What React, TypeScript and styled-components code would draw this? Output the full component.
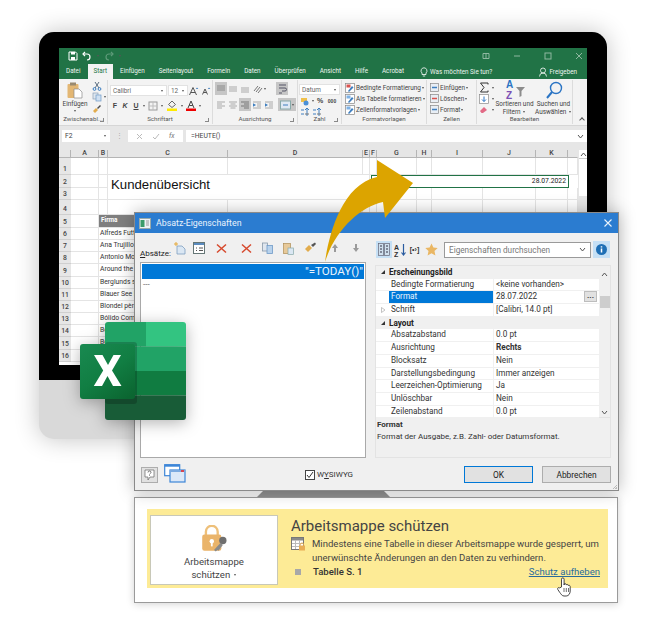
import React from 'react';
import styled, { createGlobalStyle } from 'styled-components';

const UI = `Roboto, "Open Sans", "Liberation Sans", sans-serif`;

const Global = createGlobalStyle`
  html, body { margin: 0; padding: 0; background: #fff; }
  * { box-sizing: border-box; }
`;

const Page = styled.div`
  position: relative;
  width: 650px;
  height: 633px;
  padding-top: 32px;
  overflow: hidden;
  background: #fff;
  font-family: ${UI};
`;

/* monitor */
const Monitor = styled.div`
  width: 568px;
  height: 407px;
  margin-left: 39px;
  border-radius: 15px;
  overflow: hidden;
  background: #d9d9d9;
  box-shadow: 0 0 24px rgba(0, 0, 0, 0.24);
`;
const Bezel = styled.div`
  height: 348px;
  padding: 16px 20px 0;
  background: #000;
`;
const Screen = styled.div`
  display: flex;
  flex-direction: column;
  height: 317px;
  overflow: hidden;
  background: #fff;
  color: #444;
`;

/* title + tabs */
const GreenBar = styled.div`
  height: 31px;
  background: #217346;
  color: #fff;
`;
const Quick = styled.div`
  display: flex;
  align-items: center;
  height: 15px;
  padding: 0 4px 0 9px;
  gap: 4px;
`;
const QuickSpacer = styled.div`
  flex: 1;
`;
const Tabs = styled.div`
  display: flex;
  align-items: flex-end;
  height: 16px;
  font-size: 6.3px;
`;
const Tab = styled.div<{ $on?: boolean }>`
  height: 15px;
  padding: 0 ${p => (p.$on ? 6 : 7)}px;
  line-height: 14px;
  background: ${p => (p.$on ? '#f3f3f3' : 'transparent')};
  color: ${p => (p.$on ? '#217346' : '#eef5f0')};
  white-space: nowrap;
`;
const TabRight = styled.div`
  display: flex;
  align-items: center;
  gap: 2px;
  height: 15px;
  margin-left: auto;
  padding-right: 10px;
  color: #eef5f0;
`;
const Tell = styled(TabRight)`
  margin-left: 9px;
  padding-right: 0;
`;

/* ribbon */
const Ribbon = styled.div`
  position: relative;
  display: flex;
  height: 47px;
  background: #f3f3f3;
  border-bottom: 1px solid #d6d6d6;
  font-size: 6.4px;
  color: #444;
`;
const Group = styled.div<{ $w: number }>`
  position: relative;
  display: flex;
  flex-direction: column;
  width: ${p => p.$w}px;
  border-right: 1px solid #dcdcdc;
  margin: 1px 0;
`;
const GroupBody = styled.div`
  display: flex;
  flex: 1;
  min-height: 0;
`;
const GroupLabel = styled.div`
  height: 9px;
  line-height: 8px;
  text-align: center;
  font-size: 6.2px;
  white-space: nowrap;
  color: #555;
`;
const Launcher = styled.span`
  position: absolute;
  right: 3px;
  bottom: 2px;
  width: 4px;
  height: 4px;
  border-right: 1px solid #888;
  border-bottom: 1px solid #888;
`;
const Stack = styled.div<{ $w?: number; $pad?: number }>`
  display: flex;
  flex-direction: column;
  ${p => (p.$w ? `width: ${p.$w}px;` : '')}
  padding-left: ${p => p.$pad ?? 0}px;
`;
const Line = styled.div<{ $h?: number; $mt?: number }>`
  display: flex;
  align-items: center;
  height: ${p => p.$h ?? 11.5}px;
  margin-top: ${p => p.$mt ?? 0}px;
  white-space: nowrap;
`;
const Tool = styled.span<{ $w?: number; $on?: boolean; $h?: number }>`
  display: inline-flex;
  flex: none;
  align-items: center;
  justify-content: center;
  width: ${p => p.$w ?? 12}px;
  height: ${p => p.$h ?? 11}px;
  background: ${p => (p.$on ? '#c6c6c6' : 'transparent')};
`;
const Big = styled.div`
  display: flex;
  flex-direction: column;
  align-items: center;
  text-align: center;
  line-height: 8px;
  white-space: nowrap;
`;
const Combo = styled.div<{ $w: number; $ml?: number }>`
  display: flex;
  align-items: center;
  justify-content: space-between;
  width: ${p => p.$w}px;
  height: 11px;
  margin-left: ${p => p.$ml ?? 0}px;
  padding: 0 2px;
  background: #fff;
  border: 1px solid #e2e2e2;
  font-size: 6.4px;
  color: #666;
`;
const Caret = styled.span`
  display: inline-block;
  flex: none;
  width: 0;
  height: 0;
  margin: 0 1px;
  vertical-align: middle;
  border-left: 1.5px solid transparent;
  border-right: 1.5px solid transparent;
  border-top: 2px solid #555;
`;
const BoldMark = styled.span<{ $u?: boolean; $i?: boolean; $s?: number }>`
  font-size: ${p => p.$s ?? 7}px;
  font-weight: 700;
  font-style: ${p => (p.$i ? 'italic' : 'normal')};
  text-decoration: ${p => (p.$u ? 'underline' : 'none')};
  font-family: "Liberation Sans", sans-serif;
`;
const Collapse = styled.span`
  position: absolute;
  right: 3px;
  bottom: 3px;
  width: 4px;
  height: 4px;
  border-left: 1px solid #555;
  border-top: 1px solid #555;
  transform: rotate(45deg);
`;

/* formula bar */
const FormulaBar = styled.div`
  display: flex;
  align-items: center;
  height: 24px;
  padding: 0 0 4px 3px;
  background: #e6e6e6;
  font-size: 6.8px;
`;
const NameBox = styled.div`
  display: flex;
  align-items: center;
  justify-content: space-between;
  width: 48px;
  height: 12px;
  padding: 0 3px;
  background: #fff;
  color: #444;
`;
const Dots = styled.div`
  width: 18px;
  text-align: center;
  color: #aaa;
  font-size: 7px;
`;
const FxBox = styled.div`
  display: flex;
  align-items: center;
  justify-content: space-around;
  width: 55px;
  height: 12px;
  padding: 0 4px;
  background: #fff;
  color: #777;
`;
const Formula = styled.div`
  display: flex;
  align-items: center;
  justify-content: space-between;
  flex: 1;
  height: 12px;
  margin-left: 3px;
  padding: 0 3px 0 5px;
  background: #fff;
  color: #444;
`;

/* sheet */
const SheetWrap = styled.div`
  display: flex;
  flex: 1;
  min-height: 0;
  background: #e6e6e6;
`;
const Sheet = styled.div`
  display: grid;
  grid-template-columns: 12px 28px 9px 120px 135px 7px 7px 40px 15px 51px 53px 32px 10px;
  grid-template-rows: 8px 17px 13px 12px 15px 13px repeat(11, 12.17px);
  flex: none;
  width: 519px;
  background: #fff;
  font-size: 6.8px;
`;
const Head = styled.div<{ $line?: boolean }>`
  background: #e6e6e6;
  border-right: 1px solid ${p => (p.$line ? '#b5b5b5' : '#e6e6e6')};
  border-bottom: 1px solid #b5b5b5;
  text-align: center;
  line-height: 7px;
  font-size: 7px;
  font-weight: 500;
  color: #444;
`;
const RowHead = styled.div`
  display: flex;
  align-items: flex-end;
  justify-content: center;
  padding-bottom: 1px;
  background: #e6e6e6;
  border-bottom: 1px solid #cfcfcf;
  font-size: 6.8px;
  font-weight: 500;
  color: #444;
`;
const Cell = styled.div`
  border-right: 1px solid #e4e4e4;
  border-bottom: 1px solid #e4e4e4;
  overflow: hidden;
  white-space: nowrap;
`;
const NameCell = styled(Cell)`
  grid-column: span 2;
  padding-left: 1px;
  line-height: 11px;
  color: #333;
`;
const FirmaCell = styled(Cell)`
  grid-column: span 2;
  padding-left: 2px;
  line-height: 10px;
  background: #7f7f7f;
  color: #fff;
  font-weight: 700;
  font-size: 6.4px;
`;
const TitleCell = styled.div`
  grid-column: 4 / span 2;
  grid-row: 3 / span 2;
  padding: 0 0 0 3px;
  border-bottom: 1px solid #e4e4e4;
  font-size: 13.2px;
  line-height: 20px;
  color: #111;
  font-family: "Liberation Sans", sans-serif;
`;
const DateCell = styled.div`
  grid-column: 7 / span 7;
  grid-row: 3;
  margin-right: 9px;
  margin-left: 1px;
  padding-right: 2px;
  border: 1px solid #217346;
  text-align: right;
  line-height: 11px;
  font-size: 6.8px;
  color: #222;
`;
const VScroll = styled.div`
  flex: 1;
`;
const ScrollUp = styled.div`
  display: flex;
  align-items: center;
  justify-content: center;
  height: 9px;
  margin-left: 1px;
  border-bottom: 1px solid #ccc;
  background: #fff;
`;
const ScrollThumb = styled.div`
  height: 37px;
  margin-left: 1px;
  background: #fff;
`;

/* dialog */
const Dialog = styled.div`
  position: absolute;
  left: 134px;
  top: 212px;
  display: flex;
  flex-direction: column;
  width: 485px;
  height: 279px;
  background: #f0f0f0;
  border: 1px solid #8a8a8a;
  box-shadow: 0 0 16px rgba(0, 0, 0, 0.28);
  font-size: 8.2px;
  color: #333;
`;
const DialogTitle = styled.div`
  display: flex;
  align-items: center;
  flex: none;
  height: 20px;
  padding: 0 4px;
  gap: 5px;
  background: #2b7cd0;
  color: #eaf3fc;
  font-size: 8.8px;
`;
const Close = styled.span`
  display: inline-flex;
  margin-left: auto;
  margin-right: 1px;
`;
const DialogBody = styled.div`
  display: flex;
  flex: 1;
  min-height: 0;
  padding: 8px 7px 0 5px;
`;
const LeftCol = styled.div`
  display: flex;
  flex-direction: column;
  width: 226px;
`;
const RightCol = styled.div`
  display: flex;
  flex-direction: column;
  width: 236px;
  margin-left: 9px;
`;
const Bar = styled.div`
  display: flex;
  align-items: center;
  flex: none;
  height: 21px;
  padding-bottom: 7px;
`;
const BarLabel = styled.span`
  align-self: flex-end;
  width: 32px;
  margin-bottom: -3px;
  font-size: 8px;
  color: #222;
  white-space: nowrap;
  & u { text-decoration: underline; }
`;
const BarTool = styled.span<{ $gap: number }>`
  display: inline-flex;
  justify-content: center;
  width: 16px;
  margin-right: ${p => p.$gap}px;
`;
const List = styled.div`
  flex: 1;
  padding: 1px;
  background: #fff;
  border: 1px solid #a9a9a9;
`;
const ListSel = styled.div`
  height: 15px;
  padding-right: 1px;
  background: #0078d7;
  color: #eaf4fd;
  text-align: right;
  font-size: 11.6px;
  line-height: 15px;
`;
const ListRest = styled.div`
  height: 11px;
  padding-left: 1px;
  line-height: 11px;
  font-size: 8px;
  color: #555;
`;
const PropBar = styled(Bar)`
  height: 17px;
  margin: 0 0 7px 1px;
  padding-bottom: 0;
`;
const Toggle = styled.span<{ $on?: boolean; $w: number }>`
  display: inline-flex;
  align-items: center;
  justify-content: center;
  flex: none;
  width: ${p => p.$w}px;
  height: 17px;
  background: ${p => (p.$on ? '#c6e0f5' : 'transparent')};
`;
const SearchBox = styled.div`
  display: flex;
  align-items: center;
  justify-content: space-between;
  width: 147px;
  height: 16px;
  margin: 0 2px 0 3px;
  padding: 0 4px;
  background: #fff;
  border: 1px solid #9a9a9a;
  font-size: 8.2px;
  color: #777;
`;
const PropPanel = styled.div`
  display: flex;
  flex: none;
  height: 153px;
  background: #fff;
  border: 1px solid #e3e3e3;
`;
const PropRows = styled.div`
  display: flex;
  flex-direction: column;
  flex: 1;
`;
const PropRow = styled.div`
  display: flex;
  flex: none;
  align-items: center;
  height: 12.7px;
  border-bottom: 1px solid #f0f0f0;
  color: #333;
`;
const GroupRow = styled(PropRow)`
  background: #f0f0f0;
  font-weight: 700;
  color: #222;
  border-bottom: 0;
`;
const Gutter = styled.span`
  display: inline-flex;
  align-items: center;
  justify-content: center;
  flex: none;
  width: 13px;
`;
const PropName = styled.span<{ $sel?: boolean }>`
  flex: none;
  width: 105px;
  height: 100%;
  padding-left: 2px;
  line-height: 11px;
  white-space: nowrap;
  background: ${p => (p.$sel ? '#0078d7' : 'transparent')};
  color: ${p => (p.$sel ? '#eaf4fd' : 'inherit')};
  border-right: 1px solid #f0f0f0;
`;
const PropValue = styled.span<{ $b?: boolean }>`
  display: flex;
  justify-content: space-between;
  flex: 1;
  height: 100%;
  padding-left: 2px;
  white-space: nowrap;
  line-height: 11px;
  font-weight: ${p => (p.$b ? 700 : 400)};
`;
const Ellipsis = styled.span`
  width: 13px;
  height: 11px;
  margin: 0 2px 0 0;
  background: #e1e1e1;
  border: 1px solid #bdbdbd;
  text-align: center;
  line-height: 7px;
  font-size: 8px;
  font-weight: 700;
`;
const PropScroll = styled.div`
  display: flex;
  flex-direction: column;
  align-items: center;
  justify-content: space-between;
  flex: none;
  width: 11px;
  padding: 6px 0 2px;
  background: #f0f0f0;
`;
const PropThumb = styled.div`
  width: 10px;
  height: 12px;
  margin-top: -84px;
  background: #cdcdcd;
`;
const Describe = styled.div`
  flex: 1;
  padding: 1px 1px;
  background: #f0f0f0;
  border: 1px solid #e3e3e3;
  border-top: 0;
  font-size: 8px;
  line-height: 11.5px;
`;
const DescribeHead = styled.div`
  font-weight: 700;
`;
const Footer = styled.div`
  position: relative;
  display: flex;
  align-items: center;
  flex: none;
  height: 32px;
  padding: 1px 7px 0 6px;
`;
const HelpBtn = styled.span`
  display: inline-flex;
  align-items: center;
  justify-content: center;
  width: 17px;
  height: 16px;
  background: #e1e1e1;
  border: 1px solid #adadad;
`;
const Windows = styled.span`
  display: inline-flex;
  margin-left: 6px;
  margin-top: -3px;
`;
const Wysiwyg = styled.label`
  display: flex;
  align-items: center;
  gap: 2px;
  margin-left: 119px;
  font-size: 8px;
`;
const CheckBox = styled.span`
  display: inline-flex;
  align-items: center;
  justify-content: center;
  width: 10px;
  height: 10px;
  background: #fff;
  border: 1px solid #444;
`;
const Btn = styled.button<{ $primary?: boolean }>`
  width: 69px;
  height: 17px;
  margin-left: ${p => (p.$primary ? 'auto' : '9px')};
  padding: 0;
  background: #e1e1e1;
  border: ${p => (p.$primary ? '1px solid #0078d7' : '1px solid #adadad')};
  font-family: inherit;
  font-size: 8.4px;
  color: #222;
`;
const Grip = styled.span`
  position: absolute;
  right: 1px;
  bottom: 1px;
  width: 6px;
  height: 6px;
  background: repeating-linear-gradient(135deg, transparent 0 1px, #bbb 1px 2px);
  clip-path: polygon(100% 0, 100% 100%, 0 100%);
`;

/* stand + lower panel */
const Stand = styled.div`
  position: absolute;
  left: 257px;
  top: 491px;
  width: 133px;
  height: 6px;
  background: #8f8f8f;
  clip-path: polygon(6px 0, 127px 0, 100% 100%, 0 100%);
`;
const Panel = styled.div`
  width: 484px;
  height: 106px;
  margin: 58px 0 0 134px;
  padding: 11px 9px 0 12px;
  background: #fff;
  border: 1px solid #9a9a9a;
  box-shadow: 0 1px 8px rgba(0, 0, 0, 0.18);
`;
const Band = styled.div`
  display: flex;
  height: 79px;
  padding: 6px 0 3px 3px;
  background: #fdeb96;
`;
const ProtectBtn = styled.div`
  display: flex;
  flex-direction: column;
  align-items: center;
  flex: none;
  width: 128px;
  height: 70px;
  padding-top: 9px;
  background: #fff;
  border: 1px solid #c8c8b8;
  font-size: 9.6px;
  line-height: 13px;
  color: #444;
`;
const ProtectText = styled.div`
  margin-top: 2px;
  text-align: center;
`;
const Info = styled.div`
  display: flex;
  flex-direction: column;
  flex: 1;
  padding: 1px 8px 0 13px;
  color: #444;
`;
const InfoTitle = styled.div`
  font-size: 15px;
  line-height: 20px;
  color: #444;
`;
const InfoBody = styled.div`
  display: flex;
  gap: 7px;
  margin-top: 1px;
  font-size: 9.55px;
  line-height: 13.5px;
  white-space: nowrap;
`;
const InfoFoot = styled.div`
  display: flex;
  align-items: center;
  margin-top: 2px;
  font-size: 9.55px;
`;
const Bullet = styled.span`
  width: 6px;
  height: 6px;
  margin: 0 12px 0 4px;
  background: #a8a8a8;
`;
const SheetName = styled.span`
  font-weight: 500;
  color: #333;
`;
const Unlock = styled.a`
  margin-left: auto;
  color: #2a6b9c;
  text-decoration: underline;
`;

/* overlays */
const Overlay = styled.div<{ $x: number; $y: number }>`
  position: absolute;
  left: ${p => p.$x}px;
  top: ${p => p.$y}px;
  display: flex;
`;
const LogoWrap = styled(Overlay)`
  filter: drop-shadow(0 3px 8px rgba(0, 0, 0, 0.3));
`;

/* drawings */
const Svg = ({ w = 10, h = 10, children }: { w?: number; h?: number; children: React.ReactNode }) => (
  <svg width={w} height={h} viewBox={`0 0 ${w} ${h}`} fill="none">{children}</svg>
);

const Paste = () => (
  <Svg w={16} h={17}>
    <rect x="0.5" y="2" width="11" height="14" fill="#e3b774" rx="1" />
    <rect x="3" y="0.5" width="6" height="3" fill="#9a8a70" />
    <path d="M7 7h5l3 3v6H7z" fill="#fff" stroke="#8a8a8a" strokeWidth=".7" />
  </Svg>
);
const Cut = () => (
  <Svg><path d="M3 1l4 6M7 1L3 7" stroke="#5a6d80" /><circle cx="2.5" cy="8" r="1.4" stroke="#3f7fc0" /><circle cx="7.5" cy="8" r="1.4" stroke="#3f7fc0" /></Svg>
);
const CopyIco = () => (
  <Svg><rect x="1" y="1" width="5" height="6" fill="#dfe6ee" stroke="#8aa0b8" strokeWidth=".7" /><rect x="4" y="3" width="5" height="6" fill="#cfe0f2" stroke="#6f9bc8" strokeWidth=".7" /></Svg>
);
const Painter = () => (
  <Svg><path d="M1 7l3-3 2 2-3 3z" fill="#e2ac4d" /><path d="M5 4l3-3 1 1-3 3z" fill="#4c4c4c" /></Svg>
);
const GrowA = ({ small }: { small?: boolean }) => (
  <Svg w={11} h={10}><path d={small ? 'M1.5 8.5L4 3l2.5 5.5M2.5 6.5h3' : 'M.5 9L4 1.5 7.5 9M2 6.5h4'} stroke="#555" /><path d="M8 1.5l1.3 1.6H6.800z" fill="#3f7fc0" /></Svg>
);
const BorderIco = () => (
  <Svg><rect x="1" y="1" width="8" height="8" stroke="#9a9a9a" /><path d="M5 1v8M1 5h8" stroke="#bdbdbd" /></Svg>
);
const Fill = () => (
  <Svg w={10} h={11}><path d="M5 1l3.500 3.500L5 7.500 1.500 4.500z" stroke="#666" /><rect y="8.500" width="10" height="2.500" fill="#ffeb00" /></Svg>
);
const FontColor = () => (
  <Svg w={10} h={11}><path d="M2 8l3-7 3 7M3.200 5.500h3.600" stroke="#444" /><rect y="8.500" width="10" height="2.500" fill="#e00" /></Svg>
);
const AlignV = ({ at }: { at: 'top' | 'mid' | 'bot' }) => {
  const d = at === 'top' ? 'M1 2h8M1 4h8M1 6h8' : at === 'mid' ? 'M1 3h8M1 5h8M1 7h8' : 'M1 4h8M1 6h8M1 8h8';
  return <Svg><path d={d} stroke={at === 'top' ? '#8a8a8a' : '#a9a9a9'} /></Svg>;
};
const AlignH = ({ at }: { at: 'l' | 'c' | 'r' }) => {
  const d = at === 'l' ? 'M1 2h8M1 4h5M1 6h8M1 8h5' : at === 'c' ? 'M1 2h8M2.500 4h5M1 6h8M2.500 8h5' : 'M1 2h8M4 4h5M1 6h8M4 8h5';
  return <Svg><path d={d} stroke={at === 'r' ? '#777' : '#a9a9a9'} /></Svg>;
};
const Indent = () => (
  <Svg><path d="M1 2h8M5 4h4M5 6h4M1 8h8" stroke="#a9a9a9" /><path d="M4 5L1 3.200v3.600z" fill="#3f7fc0" /></Svg>
);
const Orient = () => (
  <Svg w={11}><path d="M2 7l4-5M4 8l4-5M6 9l4-5" stroke="#777" /></Svg>
);
const WrapIco = () => (
  <Svg w={11} h={12}><path d="M2 2h7M2 5h6a1.500 1.500 0 010 3H5M2 10h3" stroke="#556" /></Svg>
);
const Merge = () => (
  <Svg w={11}><rect x=".5" y="1" width="10" height="8" fill="#dfe9f3" stroke="#8aa" /><path d="M3 5h5" stroke="#3f7fc0" /></Svg>
);
const Money = () => (
  <Svg w={11}><rect x="1" y="2" width="6" height="4" fill="#f0c04a" /><circle cx="6" cy="7" r="2.500" fill="#4a90d9" /></Svg>
);
const Decimal = () => (
  <Svg w={11}><path d="M1 3h3M1 7h3M7 1v8M5 3l2-2 2 2" stroke="#3f7fc0" /><path d="M5 7h4" stroke="#777" /></Svg>
);
const StyleIco = ({ c }: { c: string }) => (
  <Svg w={10} h={10}><rect x=".5" y=".5" width="9" height="9" fill="#fff" stroke="#888" strokeWidth=".7" /><rect x="1.500" y="1.500" width="4" height="3" fill={c} /><path d="M3 8l4-5 1.500 1.500L4 9z" fill="#3f7fc0" /></Svg>
);
const CellIco = ({ c }: { c: string }) => (
  <Svg w={9} h={9}><rect x=".5" y=".5" width="8" height="8" fill="#e8eef5" stroke="#888" strokeWidth=".7" /><path d="M2 4.500h5" stroke={c} strokeWidth="1.500" /></Svg>
);
const Sigma = () => (
  <Svg w={10} h={11}><path d="M9 2.500V1H1.500l3.500 4.500L1.500 10H9V8.500" stroke="#333" /></Svg>
);
const Down = () => (
  <Svg w={10} h={10}><rect x=".5" y=".5" width="9" height="9" fill="#fff" stroke="#8a8a8a" strokeWidth=".7" /><path d="M5 2.500v5M3 5.500l2 2 2-2" stroke="#2a74c4" /></Svg>
);
const Eraser = () => (
  <Svg><path d="M1 6l4-4 3 3-4 3H2.500z" fill="#e26a86" /></Svg>
);
const SortIco = () => (
  <Svg w={22} h={22}>
    <text x="2" y="9" fontSize="10" fontWeight="700" fill="#2a74c4" fontFamily="Liberation Sans">A</text>
    <text x="2" y="20" fontSize="10" fontWeight="700" fill="#7b4fb5" fontFamily="Liberation Sans">Z</text>
    <path d="M12 8h9l-3.500 4v5l-2 1v-6z" fill="#8c8c8c" />
  </Svg>
);
const SearchIco = () => (
  <Svg w={18} h={19}><circle cx="11" cy="7" r="5.500" stroke="#2a74c4" strokeWidth="1.400" /><path d="M7 11l-5 6" stroke="#2a74c4" strokeWidth="2" /></Svg>
);
const SaveIco = () => (
  <Svg><path d="M1 1h6.500L9 2.500V9H1z" stroke="#fff" /><rect x="3" y="1" width="4" height="2.500" fill="#fff" /><rect x="3" y="6" width="4" height="3" fill="#fff" /></Svg>
);
const Undo = ({ dim }: { dim?: boolean }) => (
  <Svg>
    <path d={dim ? 'M9 3H5a3 3 0 000 6' : 'M1 3h4a3 3 0 010 6'} stroke={dim ? '#5d9a78' : '#fff'} strokeWidth="1.200" />
    <path d={dim ? 'M7 1l2 2-2 2' : 'M3 1L1 3l2 2'} stroke={dim ? '#5d9a78' : '#fff'} strokeWidth="1.200" />
  </Svg>
);
const Win = ({ kind }: { kind: string }) => (
  <Svg w={8} h={8}>
    {kind === 'box' && <path d="M1 1.500h6v5H1zM4 1.500v5" stroke="#8fb8a0" />}
    {kind === 'min' && <path d="M1 4h6" stroke="#8fb8a0" />}
    {kind === 'max' && <rect x="1" y="1" width="6" height="6" stroke="#8fb8a0" />}
    {kind === 'x' && <path d="M1 1l6 6M7 1L1 7" stroke="#8fb8a0" />}
  </Svg>
);
const Bulb = () => (
  <Svg w={8} h={10}><path d="M4 .800a3 3 0 012 5.200V7.500H2V6A3 3 0 014 .800zM2.800 9h2.400" stroke="#fff" strokeWidth=".8" /></Svg>
);
const UserIco = () => (
  <Svg w={8} h={10}><circle cx="4" cy="3.500" r="2.500" stroke="#fff" strokeWidth=".8" /><path d="M.500 9.500a3.500 3.500 0 017 0" stroke="#fff" strokeWidth=".8" /></Svg>
);
const DialogIcon = () => (
  <Svg w={12} h={11}><rect x=".5" y=".5" width="11" height="10" fill="#eef2f5" stroke="#9aa" /><rect x="1.500" y="2" width="4" height="7" fill="#3a9b6a" /><path d="M7 3h3M7 5h3M7 7h3" stroke="#999" /></Svg>
);
const CloseX = () => (
  <Svg><path d="M1.500 1.500l7 7M8.500 1.500l-7 7" stroke="#eaf3fc" strokeWidth="1.100" /></Svg>
);
const RedX = () => (
  <Svg w={11} h={11}><path d="M1 1.500l9 8M10 1.500l-9 8" stroke="#d6482c" strokeWidth="1.500" /></Svg>
);
const NewPar = () => (
  <Svg w={12} h={13}><path d="M3 4h5l3 3v5H3z" fill="#dbe7f3" stroke="#7f9fbf" strokeWidth=".8" /><path d="M2 0v4M0 2h4" stroke="#e5a93b" /></Svg>
);
const Form = () => (
  <Svg w={12} h={12}><rect x=".5" y=".5" width="11" height="11" fill="#fff" stroke="#677" /><rect x="1" y="1" width="10" height="2" fill="#5b8cc0" /><path d="M3 6h1M6 6h4M3 8.500h1M6 8.500h4" stroke="#555" /></Svg>
);
const Duplicate = () => (
  <Svg w={11} h={12}><rect x=".5" y="1" width="5" height="8" fill="#dfe6ee" stroke="#8899aa" strokeWidth=".8" /><rect x="5" y="3.500" width="5.500" height="8" fill="#b8d2ec" stroke="#6f9bc8" strokeWidth=".8" /></Svg>
);
const PastePar = () => (
  <Svg w={11} h={13}><rect x=".5" y="1.500" width="7" height="10" fill="#e7c999" stroke="#b08d55" strokeWidth=".7" /><rect x="5" y="6" width="5.500" height="6.500" fill="#dbe7f3" stroke="#8aa" strokeWidth=".7" /></Svg>
);
const Broom = () => (
  <Svg w={13} h={12}><path d="M1 7l4-4 3 3-4 4z" fill="#e2ac4d" /><path d="M7 3l4-2.500 1 1.500-3 3z" fill="#555" /></Svg>
);
const ArrowV = ({ up }: { up?: boolean }) => (
  <Svg w={8} h={10}><path d={up ? 'M4 1L1 5h2v4h2V5h2z' : 'M4 9L1 5h2V1h2v4h2z'} fill="#9a9a9a" /></Svg>
);
const Categories = () => (
  <Svg w={12} h={13}><rect x=".5" y=".5" width="11" height="12" fill="#cfe0ee" stroke="#667" strokeWidth=".7" /><path d="M6 1v11M2 3h2M2 6h2M2 9h2M8 3h2M8 6h2M8 9h2" stroke="#334" /></Svg>
);
const SortAz = () => (
  <Svg w={12} h={14}>
    <text x="0" y="6.500" fontSize="7" fontWeight="700" fill="#333" fontFamily="Liberation Sans">A</text>
    <text x="0" y="13.500" fontSize="7" fontWeight="700" fill="#333" fontFamily="Liberation Sans">Z</text>
    <path d="M9.500 1v11M7.500 9.500l2 2.500 2-2.500" stroke="#2a5ca0" strokeWidth="1.200" />
  </Svg>
);
const Star = () => (
  <Svg w={13} h={13}><path d="M6.500.500l1.900 4 4.300.500-3.200 3 .9 4.400L6.500 10.200 2.600 12.400l.9-4.400-3.200-3 4.300-.500z" fill="#eab764" /></Svg>
);
const InfoIco = () => (
  <Svg w={11} h={11}><circle cx="5.500" cy="5.500" r="5.500" fill="#1f6fb5" /><path d="M5.500 2.200v1.200M5.500 4.600v4" stroke="#fff" strokeWidth="1.500" /></Svg>
);
const Tri = ({ open }: { open?: boolean }) => (
  <Svg w={6} h={6}>{open ? <path d="M5 1v4H1z" fill="#333" /> : <path d="M1.500 .5L5 3 1.500 5.500z" stroke="#aaa" strokeWidth=".7" />}</Svg>
);
const Chevron = ({ up }: { up?: boolean }) => (
  <Svg w={7} h={5}><path d={up ? 'M1 4l2.500-3L6 4' : 'M1 1l2.500 3L6 1'} stroke="#555" strokeWidth="1" /></Svg>
);
const Help = () => (
  <Svg w={11} h={12}><path d="M1 1h9v7H6l-2 3V8H1z" fill="#fff" stroke="#666" strokeWidth=".7" /><path d="M4 3.500a1.500 1.500 0 113 0c0 1-1.500 1-1.500 2M5.500 6.300v.7" stroke="#444" strokeWidth=".7" /></Svg>
);
const WindowsIco = () => (
  <Svg w={22} h={19}>
    <rect x=".7" y=".7" width="15" height="11" fill="#fff" stroke="#3d86d8" strokeWidth="1.200" />
    <rect x=".7" y=".7" width="15" height="2" fill="#3d86d8" />
    <rect x="6" y="6" width="15" height="12" fill="#dbe8f8" stroke="#3d86d8" strokeWidth="1.200" />
    <rect x="6" y="6" width="15" height="2" fill="#7aa9e0" />
    <rect x="17" y="6" width="3" height="2" fill="#d64550" />
  </Svg>
);
const Check = () => (
  <Svg w={8} h={8}><path d="M1 4l2 2.500L7 1" stroke="#333" /></Svg>
);
const Lock = () => (
  <svg width="28" height="28" viewBox="0 0 38 38" fill="none">
    <path d="M8 14V9a8 8 0 0116 0v5" stroke="#eec07a" strokeWidth="3.200" />
    <rect x="3" y="13" width="26" height="22" rx="3" fill="#eab46a" />
    <circle cx="16" cy="22" r="3" fill="#fff" />
    <path d="M16 23v6" stroke="#fff" strokeWidth="2.400" />
    <circle cx="31" cy="21" r="5" fill="#6f6f6f" />
    <path d="M28 24l-9 10 2.500 2 2-2 1.500 1 6-8" fill="#8a8a8a" />
  </svg>
);
const TableLock = () => (
  <Svg w={14} h={14}>
    <rect x=".5" y=".5" width="12" height="12" fill="#fff" stroke="#777" />
    <rect x="1" y="1" width="11" height="2.500" fill="#8a8a8a" />
    <path d="M4.500 3v9M8.500 3v9M1 6.500h11M1 9.500h11" stroke="#bbb" />
    <rect x="8" y="8.500" width="6" height="5" fill="#e9ad55" />
    <path d="M9.500 8.500v-1a1.500 1.500 0 013 0v1" stroke="#e9ad55" />
  </Svg>
);
const Hand = () => (
  <Svg w={15} h={20}>
    <path d="M4.500 10V2.200a1.300 1.300 0 012.600 0V8l.3-1.300c1.500-.3 1.700.3 1.800 1.300.5-1 2-.7 2 .5.800-.5 2-.1 2 1V14c0 2.500-1.500 5-4 5H7c-2 0-3-2-4.200-3.500L.8 12.500c-.8-1.300.7-2.500 1.800-1.600z" fill="#fff" stroke="#333" strokeWidth=".9" strokeLinejoin="round" />
    <path d="M7 11v4M9.300 11v4M11.500 11v4" stroke="#333" strokeWidth=".7" />
  </Svg>
);
const ArrowGold = () => (
  <svg width="100" height="110" viewBox="0 0 100 110">
    <path d="M5 107C8 85 20 30 57 22L57 5 93 28 65 63 63 47C40 52 15 75 5 107z" fill="#dca400" />
  </svg>
);
const ExcelLogo = () => (
  <svg width="106" height="98" viewBox="0 0 106 98">
    <path d="M28 0h38v24.500H25V3a3 3 0 013-3z" fill="#21a366" />
    <path d="M66 0h37a3 3 0 013 3v21.500H66z" fill="#33c481" />
    <rect x="25" y="24.500" width="81" height="24.500" fill="#21a366" />
    <rect x="25" y="49" width="81" height="24.500" fill="#107c41" />
    <path d="M25 73.500h81V95a3 3 0 01-3 3H28a3 3 0 01-3-3z" fill="#185c37" />
    <rect x="25" y="20" width="32" height="62" rx="3" fill="#000" opacity=".2" />
    <defs>
      <linearGradient id="xl" x1=".15" y1="0" x2=".85" y2="1">
        <stop offset="0" stopColor="#18884f" />
        <stop offset=".5" stopColor="#117e43" />
        <stop offset="1" stopColor="#0b6631" />
      </linearGradient>
    </defs>
    <rect x="0" y="22" width="55" height="55" rx="3" fill="url(#xl)" />
    <path d="M14 33h8.500l5.500 10 5.500-10h7.500l-9 15.500L41.500 64H33l-5.500-10L22 64h-8.200l9.400-15.500z" fill="#fff" />
  </svg>
);

const colHeads: [string, boolean][] = [
  ['', true], ['A', true], ['B', true], ['C', true], ['D', true], ['E', true], ['F', true],
  ['G', true], ['H', true], ['I', true], ['J', true], ['K', true], ['', false],
];
const tableNames: Record<number, string> = {
  6: 'Alfreds Futterkiste',
  7: 'Ana Trujillo Emparedados',
  8: 'Antonio Moreno Taquería',
  9: 'Around the Horn',
  10: 'Berglunds snabbköp',
  11: 'Blauer See Delikatessen',
  12: 'Blondel père et fils',
  13: 'Bólido Comidas preparadas',
  14: "Bon app'",
  15: 'Bottom-Dollar Markets',
  16: "B's Beverages",
};

const SheetGrid = () => {
  const rows = Array.from({ length: 16 }, (_, i) => i + 1);
  return (
    <Sheet>
      {colHeads.map(([c, line], i) => <Head key={i} $line={line}>{c}</Head>)}
      {rows.flatMap(r => {
        const out: React.ReactNode[] = [<RowHead key={`h${r}`}>{r}</RowHead>];
        for (let c = 1; c <= 12; c++) {
          const key = `${r}-${c}`;
          if ((r === 2 || r === 3) && (c === 3 || c === 4)) continue;
          if (r === 2 && c >= 6) continue;
          // the table starts in column B and runs over C
          if (r >= 5 && c === 3) continue;
          if (c === 2 && r === 5) out.push(<FirmaCell key={key}>Firma</FirmaCell>);
          else if (c === 2 && tableNames[r]) out.push(<NameCell key={key}>{tableNames[r]}</NameCell>);
          else out.push(<Cell key={key} />);
        }
        return out;
      })}
      <TitleCell>Kundenübersicht</TitleCell>
      <DateCell>28.07.2022</DateCell>
    </Sheet>
  );
};

const Ribbons = () => (
  <Ribbon>
    <Group $w={49}>
      <GroupBody>
        <Stack $w={32}>
          <Big>
            <Tool $w={32} $h={20}><Paste /></Tool>
            <span>Einfügen</span>
            <Tool $w={32} $h={6}><Caret /></Tool>
          </Big>
        </Stack>
        <Stack>
          <Line><Tool><Cut /></Tool></Line>
          <Line><Tool><CopyIco /></Tool><Caret /></Line>
          <Line><Tool><Painter /></Tool></Line>
        </Stack>
      </GroupBody>
      <GroupLabel>Zwischenabl...</GroupLabel>
      <Launcher />
    </Group>
    <Group $w={105}>
      <GroupBody>
        <Stack $pad={2}>
          <Line $h={13} $mt={4}>
            <Combo $w={57}>Calibri<Caret /></Combo>
            <Combo $w={20} $ml={1}>12<Caret /></Combo>
            <Tool $w={12}><GrowA /></Tool>
            <Tool $w={12}><GrowA small /></Tool>
          </Line>
          <Line $h={13} $mt={2}>
            <Tool $w={10}><BoldMark>F</BoldMark></Tool>
            <Tool $w={10}><BoldMark $i>K</BoldMark></Tool>
            <Tool $w={12}><BoldMark $u>U</BoldMark></Tool>
            <Caret />
            <Tool $w={14}><BorderIco /></Tool>
            <Caret />
            <Tool $w={16}><Fill /></Tool>
            <Caret />
            <Tool $w={14}><FontColor /></Tool>
            <Caret />
          </Line>
        </Stack>
      </GroupBody>
      <GroupLabel>Schriftart</GroupLabel>
      <Launcher />
    </Group>
    <Group $w={85}>
      <GroupBody>
        <Stack $pad={2}>
          <Line $h={15} $mt={1}>
            <Tool $w={12} $h={13} $on><AlignV at="top" /></Tool>
            <Tool $w={12}><AlignV at="mid" /></Tool>
            <Tool $w={12}><AlignV at="bot" /></Tool>
            <Tool $w={12}><Orient /></Tool>
            <Caret />
            <Tool $w={9} />
            <Tool $w={12} $h={13} $on><WrapIco /></Tool>
          </Line>
          <Line $h={15} $mt={1}>
            <Tool $w={12}><AlignH at="l" /></Tool>
            <Tool $w={12}><AlignH at="c" /></Tool>
            <Tool $w={12} $h={13} $on><AlignH at="r" /></Tool>
            <Tool $w={12}><Indent /></Tool>
            <Tool $w={12}><Indent /></Tool>
            <Tool $w={3} />
            <Tool $w={18} $h={13} $on><Merge /><Caret /></Tool>
          </Line>
        </Stack>
      </GroupBody>
      <GroupLabel>Ausrichtung</GroupLabel>
      <Launcher />
    </Group>
    <Group $w={44}>
      <GroupBody>
        <Stack $pad={1}>
          <Line $h={13} $mt={4}><Combo $w={41}>Datum<Caret /></Combo></Line>
          <Line $h={12}>
            <Tool $w={12}><Money /></Tool><Caret />
            <Tool $w={10}><BoldMark>%</BoldMark></Tool>
            <Tool $w={14}><BoldMark $s={5}>000</BoldMark></Tool>
          </Line>
          <Line $h={12}>
            <Tool $w={12}><Decimal /></Tool>
            <Tool $w={12}><Decimal /></Tool>
          </Line>
        </Stack>
      </GroupBody>
      <GroupLabel>Zahl</GroupLabel>
      <Launcher />
    </Group>
    <Group $w={85}>
      <GroupBody>
        <Stack $pad={2}>
          <Line $mt={2}><Tool $w={12}><StyleIco c="#d9534f" /></Tool>Bedingte Formatierung<Caret /></Line>
          <Line><Tool $w={12}><StyleIco c="#7fb2e5" /></Tool>Als Tabelle formatieren<Caret /></Line>
          <Line><Tool $w={12}><StyleIco c="#7fb2e5" /></Tool>Zellenformatvorlagen<Caret /></Line>
        </Stack>
      </GroupBody>
      <GroupLabel>Formatvorlagen</GroupLabel>
    </Group>
    <Group $w={50}>
      <GroupBody>
        <Stack $pad={2}>
          <Line $mt={2}><Tool $w={11}><CellIco c="#3f7fc0" /></Tool>Einfügen<Caret /></Line>
          <Line><Tool $w={11}><CellIco c="#d9534f" /></Tool>Löschen<Caret /></Line>
          <Line><Tool $w={11}><CellIco c="#3f7fc0" /></Tool>Format<Caret /></Line>
        </Stack>
      </GroupBody>
      <GroupLabel>Zellen</GroupLabel>
    </Group>
    <Group $w={96}>
      <GroupBody>
        <Stack>
          <Line $mt={2}><Tool $w={14}><Sigma /></Tool><Caret /></Line>
          <Line><Tool $w={14}><Down /></Tool><Caret /></Line>
          <Line><Tool $w={14}><Eraser /></Tool><Caret /></Line>
        </Stack>
        <Big>
          <Tool $w={39} $h={20}><SortIco /></Tool>
          <span>Sortieren und</span>
          <span>Filtern <Caret /></span>
        </Big>
        <Big>
          <Tool $w={39} $h={20}><SearchIco /></Tool>
          <span>Suchen und</span>
          <span>Auswählen <Caret /></span>
        </Big>
      </GroupBody>
      <GroupLabel>Bearbeiten</GroupLabel>
    </Group>
    <Collapse />
  </Ribbon>
);

const props: [string, string, boolean?][] = [
  ['Absatzabstand', '0.0 pt'],
  ['Ausrichtung', 'Rechts', true],
  ['Blocksatz', 'Nein'],
  ['Darstellungsbedingung', 'Immer anzeigen'],
  ['Leerzeichen-Optimierung', 'Ja'],
  ['Unlöschbar', 'Nein'],
  ['Zeilenabstand', '0.0 pt'],
];

export default function App() {
  return (
    <Page>
      <Global />
      <Monitor>
        <Bezel>
          <Screen>
            <GreenBar>
              <Quick>
                <SaveIco />
                <Undo />
                <Caret />
                <Undo dim />
                <Caret />
                <QuickSpacer />
                <Win kind="box" />
                <Tool $w={15} />
                <Win kind="min" />
                <Tool $w={15} />
                <Win kind="max" />
                <Tool $w={15} />
                <Win kind="x" />
              </Quick>
              <Tabs>
                <Tab>Datei</Tab>
                <Tab $on>Start</Tab>
                <Tab>Einfügen</Tab>
                <Tab>Seitenlayout</Tab>
                <Tab>Formeln</Tab>
                <Tab>Daten</Tab>
                <Tab>Überprüfen</Tab>
                <Tab>Ansicht</Tab>
                <Tab>Hilfe</Tab>
                <Tab>Acrobat</Tab>
                <Tell><Bulb />Was möchten Sie tun?</Tell>
                <TabRight><UserIco />Freigeben</TabRight>
              </Tabs>
            </GreenBar>
            <Ribbons />
            <FormulaBar>
              <NameBox>F2<Caret /></NameBox>
              <Dots>⋮</Dots>
              <FxBox>
                <Svg w={7} h={7}><path d="M1 1l5 5M6 1L1 6" stroke="#bbb" /></Svg>
                <Svg w={8} h={7}><path d="M1 4l2 2 4-5" stroke="#bbb" /></Svg>
                <i>fx</i>
              </FxBox>
              <Formula>=HEUTE()<Chevron /></Formula>
            </FormulaBar>
            <SheetWrap>
              <SheetGrid />
              <VScroll>
                <ScrollUp><Chevron up /></ScrollUp>
                <ScrollThumb />
              </VScroll>
            </SheetWrap>
          </Screen>
        </Bezel>
      </Monitor>

      <Panel>
        <Band>
          <ProtectBtn>
            <Lock />
            <ProtectText>Arbeitsmappe<br />schützen <Caret /></ProtectText>
          </ProtectBtn>
          <Info>
            <InfoTitle>Arbeitsmappe schützen</InfoTitle>
            <InfoBody>
              <TableLock />
              <span>Mindestens eine Tabelle in dieser Arbeitsmappe wurde gesperrt, um<br />unerwünschte Änderungen an den Daten zu verhindern.</span>
            </InfoBody>
            <InfoFoot>
              <Bullet />
              <SheetName>Tabelle S. 1</SheetName>
              <Unlock>Schutz aufheben</Unlock>
            </InfoFoot>
          </Info>
        </Band>
      </Panel>

      <Stand />
      <Dialog>
        <DialogTitle>
          <DialogIcon />
          Absatz-Eigenschaften
          <Close><CloseX /></Close>
        </DialogTitle>
        <DialogBody>
          <LeftCol>
            <Bar>
              <BarLabel><u>A</u>bsätze:</BarLabel>
              <BarTool $gap={3}><NewPar /></BarTool>
              <BarTool $gap={6}><Form /></BarTool>
              <BarTool $gap={9}><RedX /></BarTool>
              <BarTool $gap={5}><RedX /></BarTool>
              <BarTool $gap={5}><Duplicate /></BarTool>
              <BarTool $gap={6}><PastePar /></BarTool>
              <BarTool $gap={9}><Broom /></BarTool>
              <BarTool $gap={5}><ArrowV up /></BarTool>
              <BarTool $gap={0}><ArrowV /></BarTool>
            </Bar>
            <List>
              <ListSel>"=TODAY()"</ListSel>
              <ListRest>---</ListRest>
            </List>
          </LeftCol>
          <RightCol>
            <PropBar>
              <Toggle $w={16} $on><Categories /></Toggle>
              <Toggle $w={15}><SortAz /></Toggle>
              <Toggle $w={15}><BoldMark>[•›]</BoldMark></Toggle>
              <Toggle $w={19}><Star /></Toggle>
              <SearchBox>Eigenschaften durchsuchen<Chevron /></SearchBox>
              <Toggle $w={17} $on><InfoIco /></Toggle>
            </PropBar>
            <PropPanel>
              <PropRows>
                <GroupRow><Gutter><Tri open /></Gutter>Erscheinungsbild</GroupRow>
                <PropRow><Gutter /><PropName>Bedingte Formatierung</PropName><PropValue>&lt;keine vorhanden&gt;</PropValue></PropRow>
                <PropRow><Gutter /><PropName $sel>Format</PropName><PropValue>28.07.2022<Ellipsis>...</Ellipsis></PropValue></PropRow>
                <PropRow><Gutter><Tri /></Gutter><PropName>Schrift</PropName><PropValue>[Calibri, 14.0 pt]</PropValue></PropRow>
                <GroupRow><Gutter><Tri open /></Gutter>Layout</GroupRow>
                {props.map(([k, v, b]) => (
                  <PropRow key={k}><Gutter /><PropName>{k}</PropName><PropValue $b={b}>{v}</PropValue></PropRow>
                ))}
              </PropRows>
              <PropScroll>
                <Chevron up />
                <PropThumb />
                <Chevron />
              </PropScroll>
            </PropPanel>
            <Describe>
              <DescribeHead>Format</DescribeHead>
              Format der Ausgabe, z.B. Zahl- oder Datumsformat.
            </Describe>
          </RightCol>
        </DialogBody>
        <Footer>
          <HelpBtn><Help /></HelpBtn>
          <Windows><WindowsIco /></Windows>
          <Wysiwyg><CheckBox><Check /></CheckBox><span>W<u>Y</u>SIWYG</span></Wysiwyg>
          <Btn $primary>OK</Btn>
          <Btn>Abbrechen</Btn>
          <Grip />
        </Footer>
      </Dialog>

      <Overlay $x={320} $y={155}><ArrowGold /></Overlay>
      <LogoWrap $x={80} $y={322}><ExcelLogo /></LogoWrap>
      <Overlay $x={557} $y={577}><Hand /></Overlay>
    </Page>
  );
}
